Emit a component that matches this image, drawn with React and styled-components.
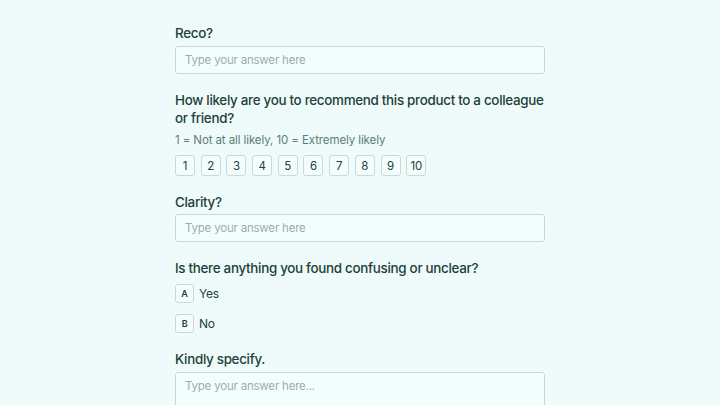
import styled, { createGlobalStyle } from 'styled-components';

const GlobalStyle = createGlobalStyle`
    html, body {
        margin: 0;
        background: #effbfb;
        font-family: Inter, "Noto Sans", sans-serif;
        color: #1e4038;
    }
    * { box-sizing: border-box; }
`;

const Form = styled.div`
    width: 370px;
    margin: 0 auto;
    padding-top: 24px;
    display: flex;
    flex-direction: column;
    gap: 17px;
`;

const Question = styled.div`
    display: flex;
    flex-direction: column;
`;

const Label = styled.div`
    font-size: 13.4px;
    line-height: 18px;
    font-weight: 500;
    letter-spacing: -0.3px;
    color: #1e4038;
    margin-bottom: ${p => p.$gap || 4}px;
`;

const Hint = styled.div`
    font-size: 11.5px;
    line-height: 16px;
    letter-spacing: -0.1px;
    color: #607c75;
    margin: 1px 0 7px;
`;

const TextInput = styled.input`
    width: 100%;
    height: 28px;
    border: 1px solid #c9d7d5;
    border-radius: 3px;
    background: #f4fdfd;
    padding: 0 9px;
    font-family: inherit;
    font-size: 11.5px;
    letter-spacing: -0.2px;
    color: #1e4038;
    outline: none;
    &::placeholder { color: #9aaeab; }
`;

const TextArea = styled.textarea`
    width: 100%;
    height: 60px;
    border: 1px solid #c9d7d5;
    border-radius: 3px;
    background: #f4fdfd;
    padding: 6px 9px;
    font-family: inherit;
    font-size: 11.5px;
    letter-spacing: -0.2px;
    resize: none;
    outline: none;
    &::placeholder { color: #9aaeab; }
`;

const Scale = styled.div`
    display: flex;
    gap: 5.7px;
`;

const ScaleBox = styled.div`
    width: 20px;
    height: 21px;
    border: 1px solid #cbd8d6;
    border-radius: 3px;
    background: #f4fdfd;
    display: flex;
    align-items: center;
    justify-content: center;
    font-size: 11.5px;
    letter-spacing: -0.2px;
    color: #1e4038;
`;

const Choices = styled.div`
    display: flex;
    flex-direction: column;
    gap: 11px;
    margin-top: 3px;
`;

const Choice = styled.div`
    display: flex;
    align-items: center;
    gap: 5px;
    font-size: 12px;
    letter-spacing: -0.2px;
    color: #1e4038;
`;

const Key = styled.div`
    width: 19px;
    height: 19px;
    border: 1px solid #cbd8d6;
    border-radius: 3px;
    background: #f4fdfd;
    display: flex;
    align-items: center;
    justify-content: center;
    font-size: 9px;
    font-weight: 600;
`;

export default function App() {
    return (
        <>
            <GlobalStyle />
            <Form>
                <Question>
                    <Label>Reco?</Label>
                    <TextInput placeholder="Type your answer here" />
                </Question>
                <Question>
                    <Label>How likely are you to recommend this product to a colleague or friend?</Label>
                    <Hint>1 = Not at all likely, 10 = Extremely likely</Hint>
                    <Scale>
                        {[1, 2, 3, 4, 5, 6, 7, 8, 9, 10].map(n => (
                            <ScaleBox key={n}>{n}</ScaleBox>
                        ))}
                    </Scale>
                </Question>
                <Question>
                    <Label $gap={3}>Clarity?</Label>
                    <TextInput placeholder="Type your answer here" />
                </Question>
                <Question>
                    <Label>Is there anything you found confusing or unclear?</Label>
                    <Choices>
                        <Choice><Key>A</Key>Yes</Choice>
                        <Choice><Key>B</Key>No</Choice>
                    </Choices>
                </Question>
                <Question>
                    <Label>Kindly specify.</Label>
                    <TextArea placeholder="Type your answer here..." />
                </Question>
            </Form>
        </>
    );
}
